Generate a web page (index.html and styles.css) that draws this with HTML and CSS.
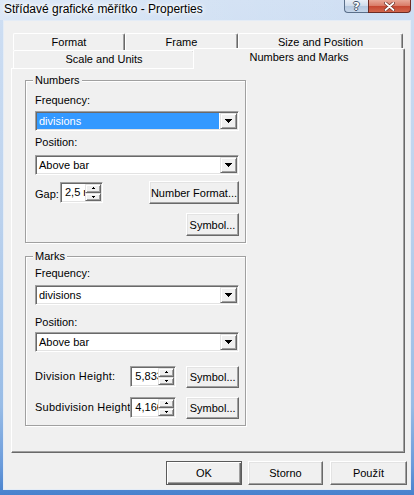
FILE: index.html
```html
<!DOCTYPE html>
<html>
<head>
<meta charset="utf-8">
<title>Properties</title>
<link rel="stylesheet" href="styles.css">
</head>
<body>
<div class="window">
  <div class="titlebar">
    <span class="title">Střídavé grafické měřítko - Properties</span>
    <div class="caption-btns">
      <div class="cap help">?</div>
      <div class="cap close">
        <svg width="11" height="9" viewBox="0 0 11 9"><path d="M1.5 1L9.5 8M9.5 1L1.5 8" stroke="#6a2a22" stroke-width="3.2" stroke-linecap="round"/><path d="M1.5 1L9.5 8M9.5 1L1.5 8" stroke="#fff" stroke-width="1.8" stroke-linecap="round"/></svg>
      </div>
    </div>
  </div>
  <div class="client">
    <div class="tabctl">
      <div class="tabrow row1">
        <div class="tab t-format">Format</div>
        <div class="tab t-frame">Frame</div>
        <div class="tab t-size">Size and Position</div>
      </div>
      <div class="tabrow row2">
        <div class="tab t-scale">Scale and Units</div>
        <div class="tab sel">Numbers and Marks</div>
      </div>
      <div class="panel">
        <div class="group g-numbers">
          <div class="legend">Numbers</div>
          <div class="lbl m7">Frequency:</div>
          <div class="combo field m4">
            <div class="ctext hl">divisions</div>
            <div class="dd raised"><svg width="7" height="4"><rect x="0" y="0" width="7" height="1"/><rect x="1" y="1" width="5" height="1"/><rect x="2" y="2" width="3" height="1"/><rect x="3" y="3" width="1" height="1"/></svg></div>
          </div>
          <div class="lbl m5">Position:</div>
          <div class="combo field m6">
            <div class="ctext">Above bar</div>
            <div class="dd raised"><svg width="7" height="4"><rect x="0" y="0" width="7" height="1"/><rect x="1" y="1" width="5" height="1"/><rect x="2" y="2" width="3" height="1"/><rect x="3" y="3" width="1" height="1"/></svg></div>
          </div>
          <div class="gaprow m6">
            <div class="gapleft">
              <span class="gaplbl">Gap:</span>
              <div class="spin field sp-gap">
                <span class="val">2,5 mm</span>
                <div class="sbs">
                  <div class="sb raised"><svg width="3" height="2"><rect x="1" y="0" width="1" height="1"/><rect x="0" y="1" width="3" height="1"/></svg></div>
                  <div class="sb raised"><svg width="3" height="2"><rect x="0" y="0" width="3" height="1"/><rect x="1" y="1" width="1" height="1"/></svg></div>
                </div>
              </div>
            </div>
            <div class="btn b-numfmt">Number Format...</div>
          </div>
          <div class="btn b-sym m9 right">Symbol...</div>
        </div>

        <div class="group g-marks">
          <div class="legend">Marks</div>
          <div class="lbl m4">Frequency:</div>
          <div class="combo field m5">
            <div class="ctext">divisions</div>
            <div class="dd raised"><svg width="7" height="4"><rect x="0" y="0" width="7" height="1"/><rect x="1" y="1" width="5" height="1"/><rect x="2" y="2" width="3" height="1"/><rect x="3" y="3" width="1" height="1"/></svg></div>
          </div>
          <div class="lbl m11">Position:</div>
          <div class="combo field m3">
            <div class="ctext">Above bar</div>
            <div class="dd raised"><svg width="7" height="4"><rect x="0" y="0" width="7" height="1"/><rect x="1" y="1" width="5" height="1"/><rect x="2" y="2" width="3" height="1"/><rect x="3" y="3" width="1" height="1"/></svg></div>
          </div>
          <div class="hrow m14">
            <div class="hlbl">Division Height:</div>
            <div class="spin field sp-h">
              <span class="val">5,833</span>
              <div class="sbs">
                <div class="sb raised"><svg width="3" height="2"><rect x="1" y="0" width="1" height="1"/><rect x="0" y="1" width="3" height="1"/></svg></div>
                <div class="sb raised"><svg width="3" height="2"><rect x="0" y="0" width="3" height="1"/><rect x="1" y="1" width="1" height="1"/></svg></div>
              </div>
            </div>
            <div class="btn b-sym2">Symbol...</div>
          </div>
          <div class="hrow m9">
            <div class="hlbl">Subdivision Height</div>
            <div class="spin field sp-h">
              <span class="val">4,166</span>
              <div class="sbs">
                <div class="sb raised"><svg width="3" height="2"><rect x="1" y="0" width="1" height="1"/><rect x="0" y="1" width="3" height="1"/></svg></div>
                <div class="sb raised"><svg width="3" height="2"><rect x="0" y="0" width="3" height="1"/><rect x="1" y="1" width="1" height="1"/></svg></div>
              </div>
            </div>
            <div class="btn b-sym2">Symbol...</div>
          </div>
        </div>
      </div>
    </div>
    <div class="btnrow">
      <div class="btn default b-ok">OK</div>
      <div class="btn b-storno">Storno</div>
      <div class="btn b-pouzit">Použít</div>
    </div>
  </div>
</div>
</body>
</html>
```
FILE: styles.css
```css
* { box-sizing: border-box; }
html, body { margin: 0; padding: 0; }
body {
  width: 414px;
  height: 495px;
  overflow: hidden;
  font-family: "Liberation Sans", Arial, sans-serif;
  font-size: 11px;
  color: #000;
}
.window {
  width: 414px;
  height: 495px;
  display: flex;
  flex-direction: column;
  background: linear-gradient(180deg, #cfdff3 0%, #bad1ed 45%, #98bce6 82%, #6a9bdb 94%, #4781cd 100%);
}
.titlebar {
  height: 20px;
  display: flex;
  justify-content: space-between;
  align-items: flex-start;
  background: linear-gradient(90deg, rgba(255,255,255,0.3) 0%, rgba(255,255,255,0.12) 50%, rgba(255,255,255,0) 100%);
}
.title {
  font-size: 12px;
  line-height: 14px;
  padding: 2px 0 0 4px;
  white-space: nowrap;
  text-shadow: 0 0 6px #fff, 0 0 6px #fff, 0 0 3px #fff;
}
.caption-btns {
  display: flex;
  margin-right: 3px;
}
.cap {
  height: 13px;
  display: flex;
  align-items: center;
  justify-content: center;
}
.help {
  width: 24px;
  border: 1px solid #5a6f8a;
  border-top: none;
  border-right: none;
  border-radius: 0 0 0 4px;
  background: linear-gradient(180deg, #e9eff7 0%, #cfdcec 50%, #b4c8df 51%, #c6d6ea 100%);
  color: #fff;
  font-family: "DejaVu Sans", sans-serif;
  font-weight: bold;
  font-size: 11px;
  line-height: 11px;
  text-shadow: 1px 0 #44556b, -1px 0 #44556b, 0 1px #44556b, 0 -1px #44556b;
}
.close {
  width: 43px;
  border: 1px solid #6b2b24;
  border-top: none;
  border-radius: 0 0 4px 0;
  background: linear-gradient(180deg, #e8a898 0%, #d97a66 50%, #c54530 51%, #d2664c 100%);
}
.client {
  flex: 1;
  margin: 0 3px 5px 3px;
  background: #f0f0f0;
  border: 1px solid #e4ecf6;
  display: flex;
  flex-direction: column;
}
.tabctl {
  margin: 12px 0 0 7px;
  width: 394px;
}
.tabrow {
  display: flex;
  margin-left: 2px;
  align-items: flex-start;
}
.row1 { height: 17px; }
.row2 { height: 18px; }
.tab {
  height: 100%;
  background: #f0f0f0;
  text-align: center;
  white-space: nowrap;
  border-top: 1px solid #fff;
  border-left: 1px solid #fff;
  border-right: 1px solid #696969;
  box-shadow: inset -1px 0 #a0a0a0;
  border-radius: 2px 2px 0 0;
}
.row1 .tab { line-height: 16px; }
.row2 .tab { line-height: 17px; }
.t-format { width: 112px; }
.t-frame { width: 113px; }
.t-size { width: 165px; }
.t-scale { width: 182px; }
.tab.sel {
  position: relative;
  z-index: 2;
  width: 212px;
  height: 21px;
  margin-top: -2px;
  margin-left: -2px;
  line-height: 17px;
}
.panel {
  height: 385px;
  border: 1px solid;
  border-color: #fff #696969 #696969 #fff;
  box-shadow: inset -1px -1px #a0a0a0;
  padding: 11px 0 0 13px;
  background: #f0f0f0;
}
.group {
  width: 221px;
  border: 1px solid #a0a0a0;
  box-shadow: inset 1px 1px #fff, 1px 1px #fff;
  padding: 0 6px 6px 9px;
  display: flex;
  flex-direction: column;
  align-items: stretch;
}
.g-marks { margin-top: 13px; }
.legend {
  align-self: flex-start;
  margin: -7px 0 0 -2px;
  padding: 0 2px;
  height: 13px;
  line-height: 13px;
  background: #f0f0f0;
}
.lbl { height: 13px; line-height: 13px; }
.m3 { margin-top: 3px; }
.m4 { margin-top: 4px; }
.m5 { margin-top: 5px; }
.m6 { margin-top: 6px; }
.m7 { margin-top: 7px; }
.m9 { margin-top: 9px; }
.m11 { margin-top: 11px; }
.m14 { margin-top: 14px; }

.field {
  background: #fff;
  border: 1px solid;
  border-color: #a0a0a0 #fff #fff #a0a0a0;
  box-shadow: inset 1px 1px #696969, inset -1px -1px #e3e3e3;
  padding: 1px;
}
.raised {
  background: #f0f0f0;
  border: 1px solid;
  border-color: #e3e3e3 #696969 #696969 #e3e3e3;
  box-shadow: inset 1px 1px #fff, inset -1px -1px #a0a0a0;
  display: flex;
  align-items: center;
  justify-content: center;
}
.combo {
  height: 20px;
  display: flex;
}
.ctext {
  flex: 1;
  line-height: 16px;
  padding-left: 2px;
  margin-right: 1px;
  white-space: nowrap;
}
.ctext.hl {
  background: #3399ff;
  color: #fff;
}
.dd {
  width: 17px;
  height: 16px;
}
.dd svg, .sb svg { display: block; fill: #000; }

.gaprow {
  height: 23px;
  display: flex;
  justify-content: space-between;
  align-items: flex-start;
}
.gapleft {
  display: flex;
  align-items: center;
  height: 23px;
}
.gaplbl { width: 25px; padding-top: 2px; }
.spin {
  display: flex;
  height: 21px;
}
.sp-gap { width: 43px; }
.sp-h { width: 46px; }
.val {
  flex: 1;
  overflow: hidden;
  white-space: nowrap;
  line-height: 17px;
  padding-left: 3px;
}
.sbs {
  width: 16px;
  display: flex;
  flex-direction: column;
}
.sb { flex: 1; }

.btn {
  background: #f0f0f0;
  border: 1px solid;
  border-color: #fff #696969 #696969 #fff;
  box-shadow: inset -1px -1px #a0a0a0, inset 1px 1px #e3e3e3;
  display: flex;
  align-items: center;
  justify-content: center;
  white-space: nowrap;
}
.b-numfmt { width: 90px; height: 23px; }
.b-sym { width: 53px; height: 23px; }
.right { align-self: flex-end; }

.hrow {
  display: flex;
  align-items: flex-start;
  height: 22px;
}
.hlbl {
  width: 96px;
  overflow: hidden;
  white-space: nowrap;
  line-height: 21px;
  letter-spacing: 0.25px;
}
.b-sym2 { width: 53px; height: 22px; margin-left: 10px; }

.btnrow {
  display: flex;
  justify-content: flex-end;
  margin-top: 8px;
  padding-right: 3px;
}
.btnrow .btn { height: 24px; }
.b-ok { width: 76px; }
.b-storno { width: 75px; margin-left: 6px; }
.b-pouzit { width: 77px; margin-left: 7px; }
.btn.default {
  border: 1px solid #5a5a5a;
  box-shadow: inset 1px 1px #fff, inset -1px -1px #696969, inset -2px -2px #a0a0a0;
}
```
